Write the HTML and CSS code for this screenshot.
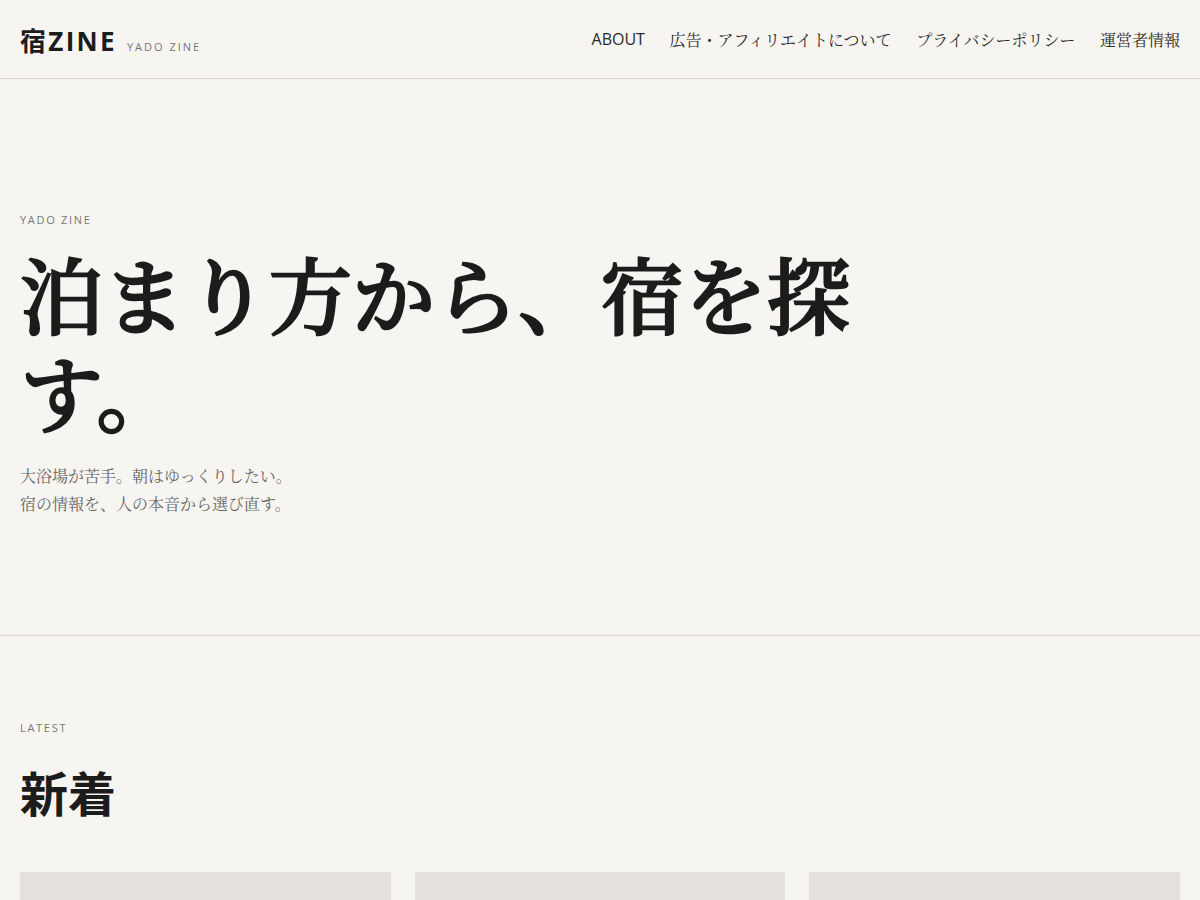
FILE: index.html
```html
<!DOCTYPE html>
<html lang="ja">
<head>
<meta charset="utf-8">
<title>宿ZINE</title>
<link rel="stylesheet" href="styles.css">
</head>
<body>
<header class="site-header">
  <a class="brand" href="#">
    <span class="brand-name">宿ZINE</span>
    <span class="brand-sub">YADO ZINE</span>
  </a>
  <nav class="nav">
    <a class="nav-link nav-en" href="#">ABOUT</a>
    <a class="nav-link" href="#">広告・アフィリエイトについて</a>
    <a class="nav-link" href="#">プライバシーポリシー</a>
    <a class="nav-link" href="#">運営者情報</a>
  </nav>
</header>
<main>
  <section class="hero">
    <p class="eyebrow">YADO ZINE</p>
    <h1 class="hero-title">泊まり方から、宿を探す。</h1>
    <p class="hero-lead">大浴場が苦手。朝はゆっくりしたい。<br>宿の情報を、人の本音から選び直す。</p>
  </section>
  <section class="latest">
    <p class="eyebrow">LATEST</p>
    <h2 class="section-title">新着</h2>
    <div class="cards">
      <article class="card"></article>
      <article class="card"></article>
      <article class="card"></article>
    </div>
  </section>
</main>
</body>
</html>
```
FILE: styles.css
```css
* { box-sizing: border-box; }
html, body { margin: 0; padding: 0; }
body {
  background: #f7f5f1;
  color: #1c1c1c;
  font-family: "Noto Serif CJK JP", "Liberation Serif", "Noto Sans CJK JP", serif;
}
a { color: inherit; text-decoration: none; }
p, h1, h2 { margin: 0; }

.site-header {
  height: 79px;
  display: flex;
  align-items: center;
  justify-content: space-between;
  padding: 0 20px;
  border-bottom: 1px solid #ddd6d0;
}
.brand { display: flex; align-items: baseline; gap: 10px; padding-top: 1px; }
.brand-name {
  font-family: "Open Sans", "Noto Sans CJK JP", sans-serif;
  font-weight: 700;
  font-size: 26px;
  letter-spacing: 2.3px;
  color: #1c1c1c;
}
.brand-sub {
  font-family: "Open Sans", sans-serif;
  font-size: 11px;
  letter-spacing: 2px;
  color: #777;
}
.nav { display: flex; gap: 24.6px; align-items: center; }
.nav-link { font-size: 16px; color: #2a2a2a; }
.nav-en { font-family: "Open Sans", sans-serif; }

.eyebrow {
  font-family: "Open Sans", sans-serif;
  font-size: 11px;
  letter-spacing: 1.7px;
  color: #777;
}

.hero {
  padding: 133px 20px 117px;
  border-bottom: 1px solid #ddd6d0;
}
.hero-title {
  margin-top: 16px;
  max-width: 880px;
  font-size: 83px;
  line-height: 98px;
  font-weight: 500;
  -webkit-text-stroke: 2.4px #1c1c1c;
  color: #1c1c1c;
}
.hero-lead {
  margin-top: 23px;
  font-size: 16px;
  line-height: 28px;
  color: #666;
}

.latest { padding: 84px 20px 0; }
.section-title {
  margin-top: 24px;
  font-family: "Noto Sans CJK JP", sans-serif;
  font-size: 48px;
  font-weight: 700;
  line-height: 64px;
  color: #1c1c1c;
}
.cards {
  margin-top: 49px;
  display: grid;
  grid-template-columns: repeat(3, 1fr);
  gap: 24px;
}
.card { height: 260px; background: #e6e1dc; }
```
